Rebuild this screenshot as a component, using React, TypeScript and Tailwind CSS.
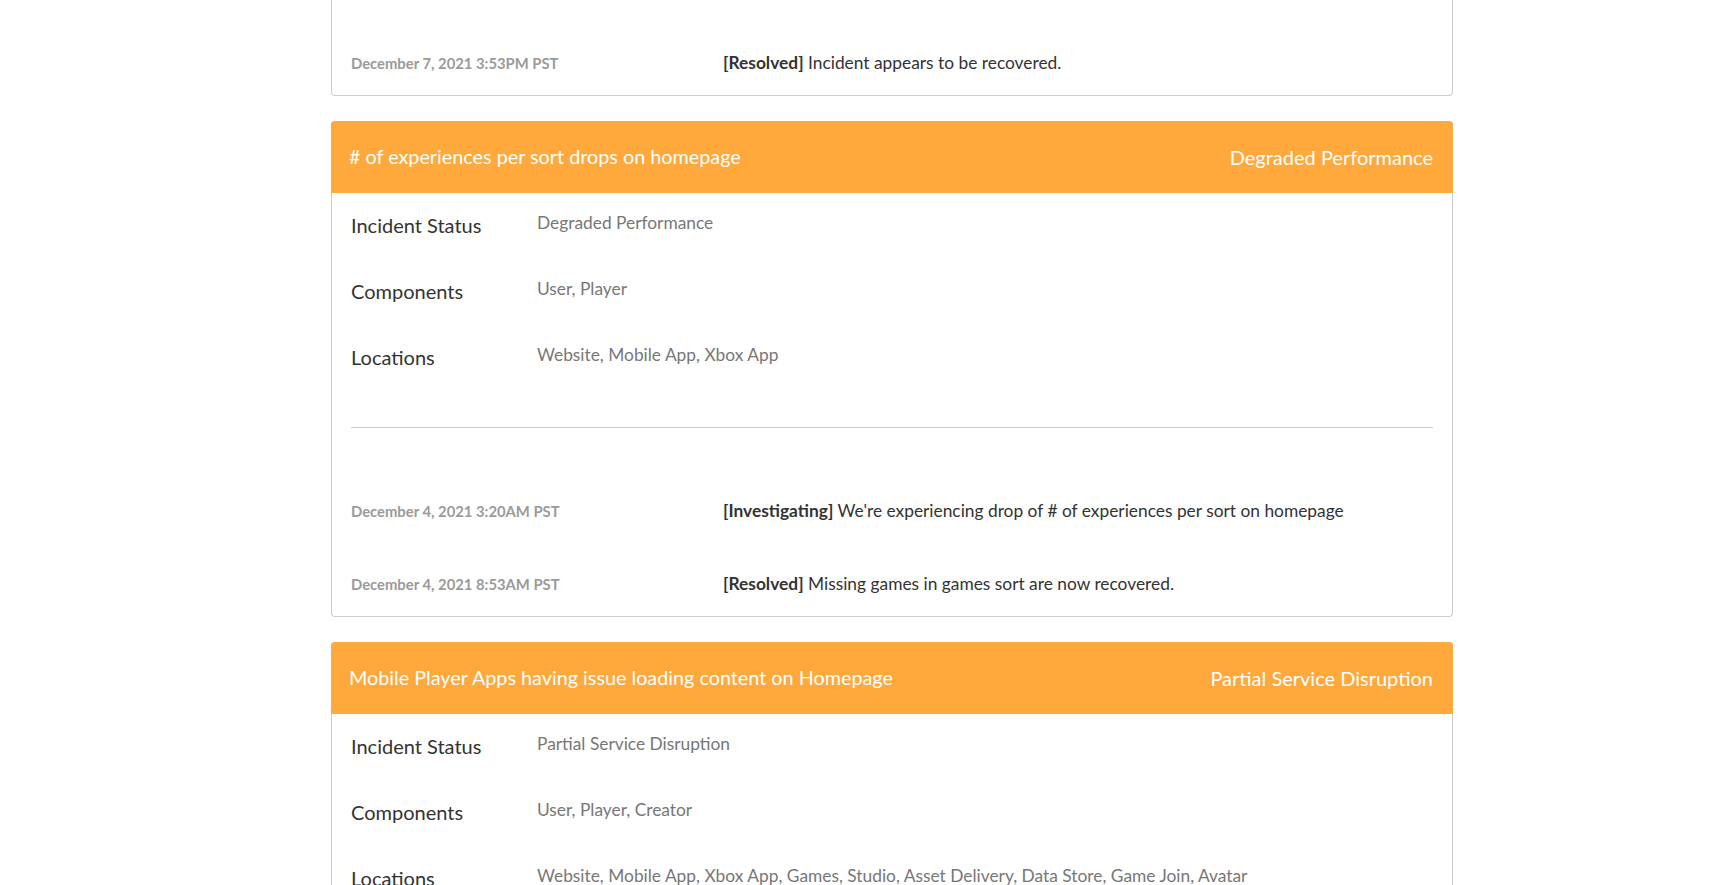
import React from "react";

type Update = { date: string; status: string; text: string };

type Incident = {
	title: string;
	status: string;
	components: string;
	locations: string;
	updates: Update[];
};

const incidents: Incident[] = [
	{
		title: "# of experiences per sort drops on homepage",
		status: "Degraded Performance",
		components: "User, Player",
		locations: "Website, Mobile App, Xbox App",
		updates: [
			{
				date: "December 4, 2021 3:20AM PST",
				status: "Investigating",
				text: "We're experiencing drop of # of experiences per sort on homepage",
			},
			{
				date: "December 4, 2021 8:53AM PST",
				status: "Resolved",
				text: "Missing games in games sort are now recovered.",
			},
		],
	},
	{
		title: "Mobile Player Apps having issue loading content on Homepage",
		status: "Partial Service Disruption",
		components: "User, Player, Creator",
		locations: "Website, Mobile App, Xbox App, Games, Studio, Asset Delivery, Data Store, Game Join, Avatar",
		updates: [],
	},
];

const UpdateRow = ({ update }: { update: Update }) => (
	<div className="flex items-center h-[64px]">
		<p className="w-[372px] shrink-0 text-[14.8px] font-bold text-[#9a9a9a]">{update.date}</p>
		<p className="text-[17.35px] text-[#333]">
			<span className="font-bold">[{update.status}]</span> {update.text}
		</p>
	</div>
);

const InfoRow = ({ label, value }: { label: string; value: string }) => (
	<div className="flex items-center h-[66px]">
		<p className="w-[186px] shrink-0 text-[20px] text-[#333] pb-[3px]">{label}</p>
		<p className="text-[17.35px] text-[#777] pb-[6px]">{value}</p>
	</div>
);

const IncidentCard = ({ incident }: { incident: Incident }) => (
	<div>
		<div className="flex justify-between items-center h-[72px] px-[18px] pr-[20px] rounded-t bg-[#ffa83b] text-white">
			<h3 className="text-[19.8px]">{incident.title}</h3>
			<span className="text-[20px]">{incident.status}</span>
		</div>
		<div className="border-x border-b border-[#cccccc] rounded-b px-[19px]">
			<InfoRow label="Incident Status" value={incident.status} />
			<InfoRow label="Components" value={incident.components} />
			<InfoRow label="Locations" value={incident.locations} />
			{incident.updates.length > 0 && (
				<>
					<div className="mt-[36px] border-t border-[#d0d0d0]" />
					<div className="pt-[51px] flex flex-col gap-[9px]">
						{incident.updates.map((u) => (
							<UpdateRow key={u.date} update={u} />
						))}
					</div>
				</>
			)}
		</div>
	</div>
);

export default function App() {
	return (
		<div className="h-[885px] overflow-hidden bg-white font-['Lato','Liberation_Sans',sans-serif]">
			<div className="mx-auto w-[1170px]">
				<div className="ml-12 flex flex-col gap-[25px]">
					{/* previous card, scrolled mostly out of view */}
					<div className="border-x border-b border-[#cccccc] rounded-b px-[19px] pt-[31px]">
						<UpdateRow
							update={{
								date: "December 7, 2021 3:53PM PST",
								status: "Resolved",
								text: "Incident appears to be recovered.",
							}}
						/>
					</div>
					{incidents.map((incident) => (
						<IncidentCard key={incident.title} incident={incident} />
					))}
				</div>
			</div>
		</div>
	);
}
